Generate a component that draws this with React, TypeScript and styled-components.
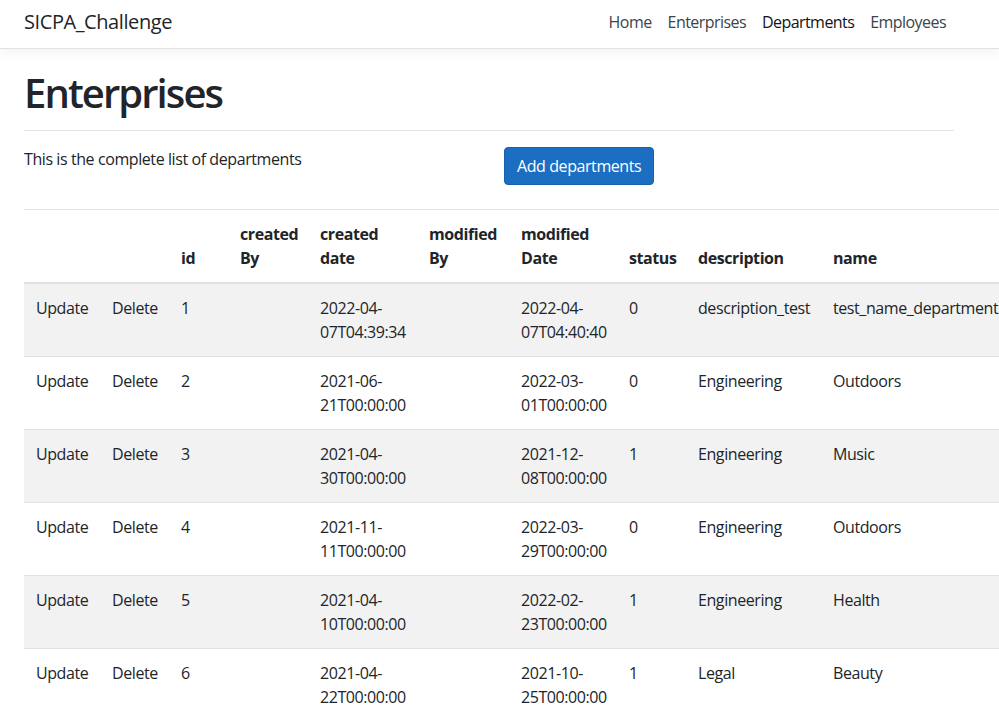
import * as React from "react";
import styled, { createGlobalStyle } from "styled-components";

const Colors = {
    Text: "#212529",
    Border: "#dee2e6",
    Stripe: "rgba(0, 0, 0, 0.05)",
    Primary: "#1b6ec2",
    PrimaryBorder: "#1861ac",
    NavLink: "#3d4349",
    NavActive: "#121416",
}

const GlobalStyle = createGlobalStyle`
    html, body {
        margin: 0;
        padding: 0;
        overflow: hidden;
        background: #fff;
    }

    body {
        font-family: "Open Sans", "Noto Sans", "Liberation Sans", sans-serif;
        font-size: 16px;
        line-height: 1.5;
        letter-spacing: -0.026em;
        color: ${Colors.Text};
    }

    * {
        box-sizing: border-box;
    }
`

const Header = styled.header`
    border-bottom: 1px solid ${Colors.Border};
    box-shadow: 0 4px 12px rgba(0, 0, 0, 0.05);
    margin-bottom: 20px;
    background: #fff;
`

const Container = styled.div`
    width: 930px;
    margin-left: 24px;
`

const NavBar = styled(Container)`
    height: 48px;
    display: flex;
    align-items: center;
    justify-content: space-between;
    padding-bottom: 4px;
`

const Brand = styled.a`
    font-size: 20px;
    line-height: 30px;
    color: ${Colors.Text};
    text-decoration: none;
`

const NavList = styled.ul`
    display: flex;
    list-style: none;
    margin: 0;
    padding: 0;
`

const NavLink = styled.a<{ $active?: boolean }>`
    display: block;
    padding: 0 8px;
    line-height: 24px;
    letter-spacing: -0.035em;
    color: ${props => props.$active ? Colors.NavActive : Colors.NavLink};
    text-decoration: none;
`

const Title = styled.h1`
    font-size: 40px;
    font-weight: 600;
    line-height: 48px;
    margin: 0;
    letter-spacing: -0.048em;
`

const Rule = styled.hr`
    border: 0;
    border-top: 1px solid rgba(0, 0, 0, 0.1);
    margin: 13px 0 16px 0;
`

const IntroRow = styled.div`
    display: grid;
    grid-template-columns: 480px 1fr;
    align-items: start;
    margin-bottom: 24px;
`

const IntroText = styled.p`
    margin: 0;
    line-height: 24px;
`

const PrimaryButton = styled.button`
    font-family: inherit;
    font-size: 16px;
    letter-spacing: inherit;
    line-height: 24px;
    color: #fff;
    background-color: ${Colors.Primary};
    border: 1px solid ${Colors.PrimaryBorder};
    border-radius: 4px;
    padding: 6px 12px;
    cursor: pointer;
`

const Table = styled.table`
    width: 982px;
    table-layout: fixed;
    border-collapse: collapse;
    color: ${Colors.Text};
`

const HeadCell = styled.th`
    text-align: left;
    vertical-align: bottom;
    font-weight: 700;
    padding: 12px;
    line-height: 24px;
    border-top: 1px solid ${Colors.Border};
    border-bottom: 2px solid ${Colors.Border};
`

const BodyRow = styled.tr<{ $striped?: boolean }>`
    background-color: ${props => props.$striped ? Colors.Stripe : "transparent"};
`

const Cell = styled.td`
    vertical-align: top;
    padding: 12px;
    line-height: 24px;
    border-top: 1px solid ${Colors.Border};
    white-space: normal;
`

const ActionLink = styled.a`
    color: ${Colors.Text};
    text-decoration: none;
`

const columnWidths = [76, 69, 59, 80, 109, 92, 108, 69, 135, 185]

const headers = ["", "", "id", "created By", "created date", "modified By", "modified Date", "status", "description", "name"]

interface Department {
    id: number
    createdBy: string
    createdDate: string
    modifiedBy: string
    modifiedDate: string
    status: number
    description: string
    name: string
}

const departments: Department[] = [
    { id: 1, createdBy: "", createdDate: "2022-04-07T04:39:34", modifiedBy: "", modifiedDate: "2022-04-07T04:40:40", status: 0, description: "description_test", name: "test_name_department" },
    { id: 2, createdBy: "", createdDate: "2021-06-21T00:00:00", modifiedBy: "", modifiedDate: "2022-03-01T00:00:00", status: 0, description: "Engineering", name: "Outdoors" },
    { id: 3, createdBy: "", createdDate: "2021-04-30T00:00:00", modifiedBy: "", modifiedDate: "2021-12-08T00:00:00", status: 1, description: "Engineering", name: "Music" },
    { id: 4, createdBy: "", createdDate: "2021-11-11T00:00:00", modifiedBy: "", modifiedDate: "2022-03-29T00:00:00", status: 0, description: "Engineering", name: "Outdoors" },
    { id: 5, createdBy: "", createdDate: "2021-04-10T00:00:00", modifiedBy: "", modifiedDate: "2022-02-23T00:00:00", status: 1, description: "Engineering", name: "Health" },
    { id: 6, createdBy: "", createdDate: "2021-04-22T00:00:00", modifiedBy: "", modifiedDate: "2021-10-25T00:00:00", status: 1, description: "Legal", name: "Beauty" },
]

const navItems = ["Home", "Enterprises", "Departments", "Employees"]

export default function App(): JSX.Element {
    return <>
        <GlobalStyle />
        <Header>
            <NavBar>
                <Brand href="#">SICPA_Challenge</Brand>
                <NavList>
                    {navItems.map(item =>
                        <li key={item}>
                            <NavLink href="#" $active={item === "Departments"}>{item}</NavLink>
                        </li>
                    )}
                </NavList>
            </NavBar>
        </Header>
        <Container>
            <Title>Enterprises</Title>
            <Rule />
            <IntroRow>
                <IntroText>This is the complete list of departments</IntroText>
                <div>
                    <PrimaryButton>Add departments</PrimaryButton>
                </div>
            </IntroRow>
            <Table>
                <colgroup>
                    {columnWidths.map((w, i) => <col key={i} style={{ width: w }} />)}
                </colgroup>
                <thead>
                    <tr>
                        {headers.map((h, i) => <HeadCell key={i}>{h}</HeadCell>)}
                    </tr>
                </thead>
                <tbody>
                    {departments.map((d, i) =>
                        <BodyRow key={d.id} $striped={i % 2 === 0}>
                            <Cell><ActionLink href="#">Update</ActionLink></Cell>
                            <Cell><ActionLink href="#">Delete</ActionLink></Cell>
                            <Cell>{d.id}</Cell>
                            <Cell>{d.createdBy}</Cell>
                            <Cell>{d.createdDate}</Cell>
                            <Cell>{d.modifiedBy}</Cell>
                            <Cell>{d.modifiedDate}</Cell>
                            <Cell>{d.status}</Cell>
                            <Cell>{d.description}</Cell>
                            <Cell>{d.name}</Cell>
                        </BodyRow>
                    )}
                </tbody>
            </Table>
        </Container>
    </>
}
